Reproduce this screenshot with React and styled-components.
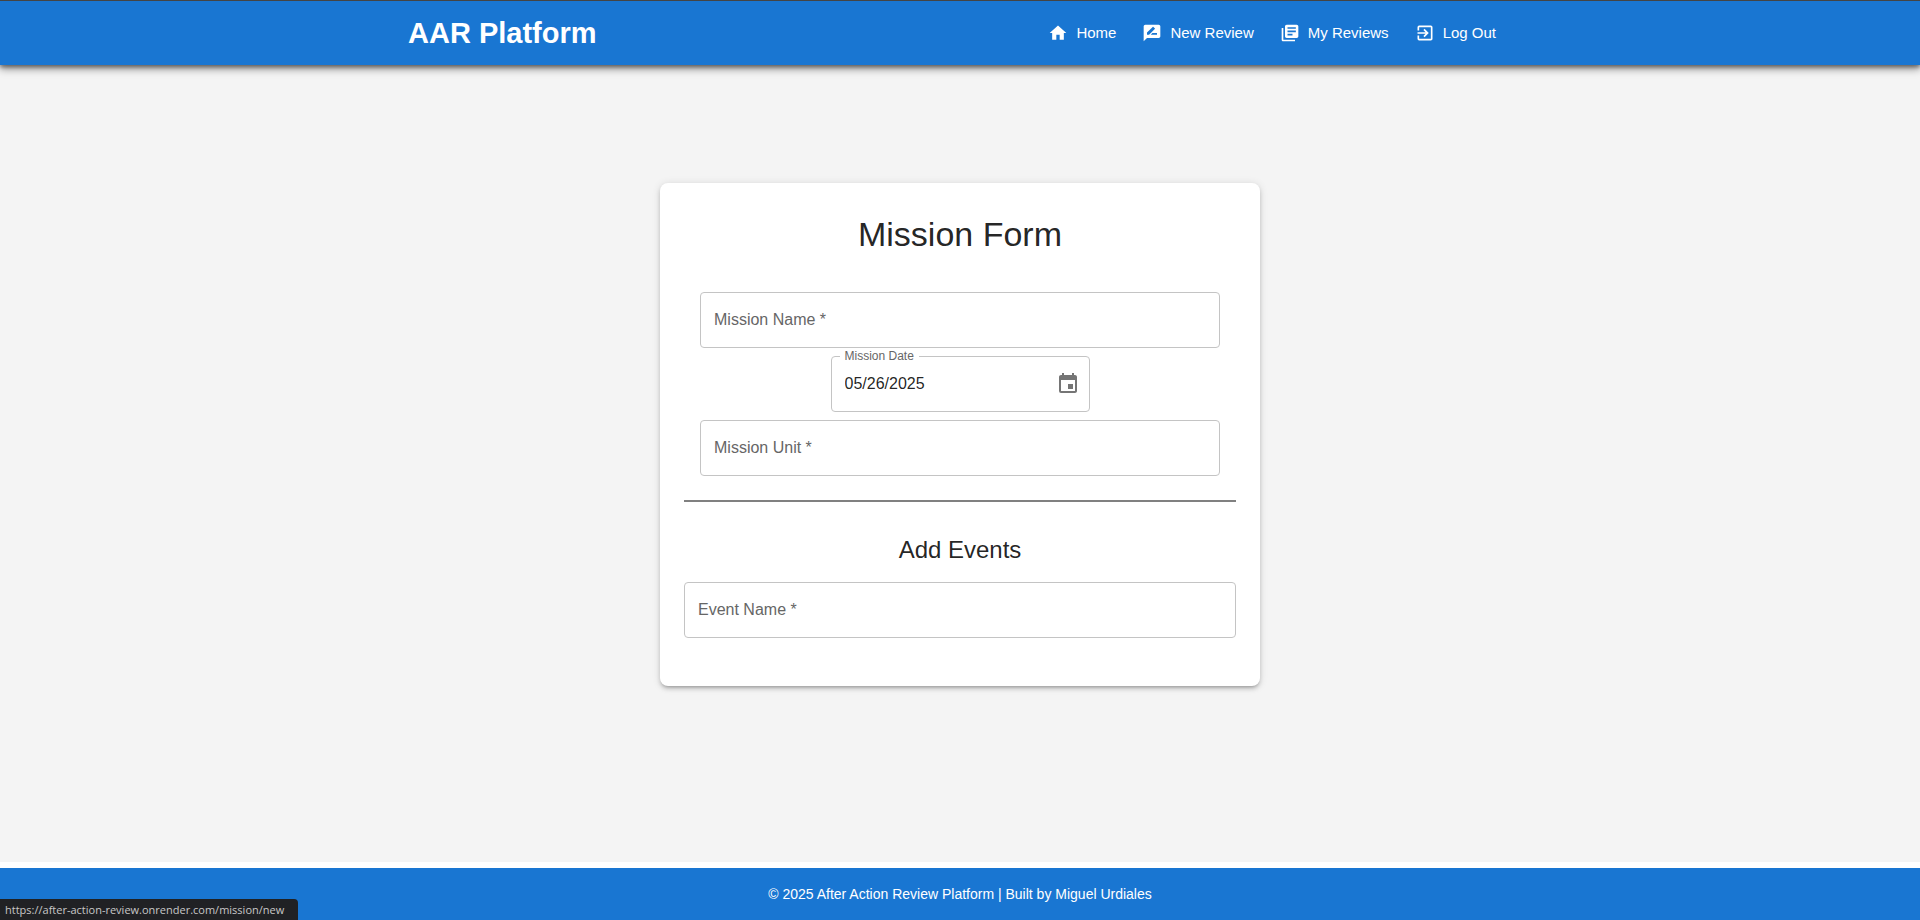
import React, { useState } from "react";
import styled, { createGlobalStyle } from "styled-components";
import { MdHome, MdRateReview, MdLibraryBooks, MdExitToApp, MdEvent } from "react-icons/md";

const GlobalStyle = createGlobalStyle`
  *, *::before, *::after {
    box-sizing: border-box;
  }
  body {
    margin: 0;
    background: #ffffff;
    color: rgba(0, 0, 0, 0.87);
    font-family: Arial, "Liberation Sans", Helvetica, sans-serif;
    font-size: 16px;
    line-height: 24px;
  }
`;

const Page = styled.div`
  display: flex;
  flex-direction: column;
  min-height: 100vh;
`;

const Header = styled.header`
  position: relative;
  border-top: 1px solid #444444;
  background: #1976d2;
  color: #ffffff;
  box-shadow:
    0 4px 8px rgba(0, 0, 0, 0.4),
    0 2px 4px rgba(0, 0, 0, 0.4);
`;

const Toolbar = styled.div`
  display: flex;
  align-items: center;
  justify-content: space-between;
  width: 60%;
  min-height: 64px;
  margin: 0 auto;
  padding: 0 40px 0 24px;
`;

const Brand = styled.h1`
  margin: 0;
  font-size: 29px;
  line-height: 40px;
  font-weight: 700;
`;

const Nav = styled.nav`
  display: flex;
  align-items: center;
  gap: 26px;
`;

const NavLink = styled.a`
  display: flex;
  align-items: center;
  gap: 8px;
  color: inherit;
  font-size: 15px;
  font-weight: 500;
  text-decoration: none;
  white-space: nowrap;

  svg {
    width: 20px;
    height: 20px;
  }
`;

const Main = styled.main`
  display: flex;
  flex: 1;
  align-items: center;
  justify-content: center;
  padding: 24px 16px 82px;
  background: #f4f4f4;
`;

const Card = styled.form`
  width: 100%;
  max-width: 600px;
  padding: 24px 24px 48px;
  border-radius: 8px;
  background: #ffffff;
  box-shadow:
    0 3px 3px -2px rgba(0, 0, 0, 0.2),
    0 3px 4px 0 rgba(0, 0, 0, 0.14),
    0 1px 8px 0 rgba(0, 0, 0, 0.12);
`;

const Title = styled.h2`
  margin: 6px 0 37px;
  font-size: 34px;
  line-height: 42px;
  font-weight: 400;
  text-align: center;
`;

const Subtitle = styled.h3`
  margin: 32px 0 16px;
  font-size: 24px;
  line-height: 32px;
  font-weight: 400;
  text-align: center;
`;

const FieldStack = styled.div`
  display: flex;
  flex-direction: column;
  align-items: center;
  gap: 8px;
  padding: 0 16px;
`;

const Field = styled.div`
  position: relative;
  display: flex;
  align-items: center;
  width: ${({ $width }) => $width || "100%"};
  height: 56px;
  border: 1px solid #c4c4c4;
  border-radius: 4px;

  &:focus-within {
    border-color: #1976d2;
  }
`;

const Label = styled.label`
  position: absolute;
  left: ${({ $raised }) => ($raised ? "8px" : "13px")};
  top: ${({ $raised }) => ($raised ? "-9px" : "15px")};
  padding: ${({ $raised }) => ($raised ? "0 5px" : "0")};
  background: #ffffff;
  color: #666666;
  font-size: ${({ $raised }) => ($raised ? "12px" : "16px")};
  line-height: ${({ $raised }) => ($raised ? "16px" : "24px")};
  pointer-events: none;
`;

const Input = styled.input`
  flex: 1;
  min-width: 0;
  height: 100%;
  padding: 0 13px;
  border: 0;
  outline: 0;
  background: transparent;
  color: rgba(0, 0, 0, 0.87);
  font: inherit;
`;

const CalendarButton = styled.button`
  display: flex;
  margin-right: 1px;
  padding: 8px;
  border: 0;
  border-radius: 50%;
  background: transparent;
  color: #757575;
  cursor: pointer;

  svg {
    width: 24px;
    height: 24px;
  }
`;

const Divider = styled.hr`
  height: 2px;
  margin: 24px 0 0;
  border: 0;
  background: #808080;
`;

const Footer = styled.footer`
  margin-top: 6px;
  padding: 16px;
  background: #1976d2;
  color: #ffffff;
  font-size: 14px;
  line-height: 20px;
  text-align: center;
`;

const StatusBubble = styled.div`
  position: fixed;
  left: 0;
  bottom: 0;
  padding: 0 14px 0 5px;
  border-radius: 0 4px 0 0;
  background: #202124;
  color: #c8c8c8;
  font-family: "Open Sans", "Noto Sans", sans-serif;
  font-size: 11px;
  line-height: 21px;
`;

const links = [
  { label: "Home", href: "/", Icon: MdHome },
  { label: "New Review", href: "/mission/new", Icon: MdRateReview },
  { label: "My Reviews", href: "/missions", Icon: MdLibraryBooks },
  { label: "Log Out", href: "/logout", Icon: MdExitToApp },
];

function TextField({ id, label }) {
  const [value, setValue] = useState("");
  const [focused, setFocused] = useState(false);
  return (
    <Field>
      <Label htmlFor={id} $raised={focused || value !== ""}>
        {label} *
      </Label>
      <Input
        id={id}
        type="text"
        required
        value={value}
        onChange={(e) => setValue(e.target.value)}
        onFocus={() => setFocused(true)}
        onBlur={() => setFocused(false)}
      />
    </Field>
  );
}

function DateField({ id, label }) {
  const [value, setValue] = useState("05/26/2025");
  return (
    <Field $width="259px">
      <Label htmlFor={id} $raised>
        {label}
      </Label>
      <Input id={id} type="text" value={value} onChange={(e) => setValue(e.target.value)} />
      <CalendarButton type="button" aria-label="Choose date">
        <MdEvent />
      </CalendarButton>
    </Field>
  );
}

export default function App() {
  return (
    <>
      <GlobalStyle />
      <Page>
        <Header>
          <Toolbar>
            <Brand>AAR Platform</Brand>
            <Nav>
              {links.map(({ label, href, Icon }) => (
                <NavLink key={label} href={href}>
                  <Icon />
                  {label}
                </NavLink>
              ))}
            </Nav>
          </Toolbar>
        </Header>
        <Main>
          <Card>
            <Title>Mission Form</Title>
            <FieldStack>
              <TextField id="mission-name" label="Mission Name" />
              <DateField id="mission-date" label="Mission Date" />
              <TextField id="mission-unit" label="Mission Unit" />
            </FieldStack>
            <Divider />
            <Subtitle>Add Events</Subtitle>
            <TextField id="event-name" label="Event Name" />
          </Card>
        </Main>
        <Footer>© 2025 After Action Review Platform | Built by Miguel Urdiales</Footer>
      </Page>
      <StatusBubble>https://after-action-review.onrender.com/mission/new</StatusBubble>
    </>
  );
}
